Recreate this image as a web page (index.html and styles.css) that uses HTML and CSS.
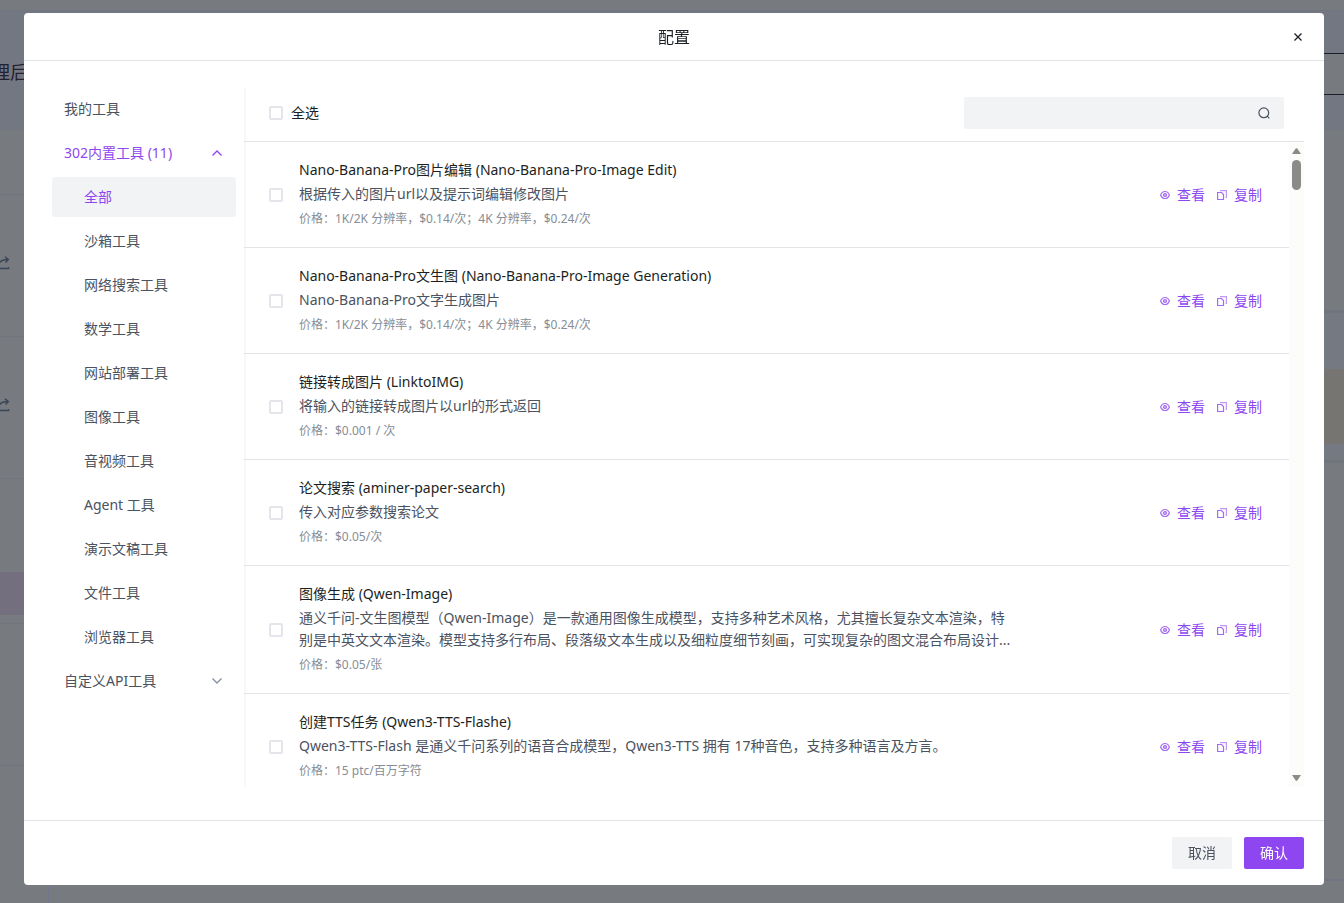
FILE: index.html
```
<!DOCTYPE html>
<html lang="zh-CN">
<head>
<meta charset="utf-8">
<title>配置</title>
<link rel="stylesheet" href="styles.css">
</head>
<body>
<svg class="defs" aria-hidden="true">
  <symbol id="eye" viewBox="0 0 10 10"><path d="M.6 5C1.600 2.500 3.200 1.500 5 1.500S8.400 2.500 9.400 5C8.400 7.500 6.800 8.500 5 8.500S1.600 7.500.6 5Z"/><circle cx="5" cy="5" r="1.500" fill="currentColor" fill-opacity=".5"/></symbol>
  <symbol id="copy" viewBox="0 0 10 10"><path d="M.6 2.500H4.500L6.500 4.500V9.500H.6Z"/><path d="M3 .6H9.400V7.500H8.500" opacity=".7"/></symbol>
  <symbol id="share" viewBox="0 0 14 14"><path d="M1 7V12.500H12.500V11M3 7.500C4.500 4.500 8 3.500 12 3.500M9 .8L12.300 3.500L9.500 6.500"/></symbol>
  <symbol id="down" viewBox="0 0 12 12"><path d="M1.500 3.500L6 8L10.500 3.500"/></symbol>
</svg>

<div class="page" aria-hidden="true">
  <div class="page-bar"></div>
  <div class="page-hero"><span class="hero-text">理后</span><span class="hero-field"></span></div>
  <div class="page-body">
    <div class="page-left">
      <div class="cell first"></div>
      <div class="cell"><svg class="share"><use href="#share"/></svg></div>
      <div class="cell"><svg class="share"><use href="#share"/></svg></div>
      <div class="cell tall"><span class="active-tag"></span></div>
      <div class="cell"></div>
    </div>
    <div class="page-right">
      <div class="notice"><span class="notice-inner"></span></div>
      <div class="block"></div>
      <div class="block-end"></div>
    </div>
  </div>
</div>

<div class="overlay">
<section class="dialog" role="dialog" aria-labelledby="dialog-title">
  <header class="dialog-head">
    <h1 id="dialog-title">配置</h1>
    <button class="close" type="button" aria-label="关闭"><svg viewBox="0 0 10 10"><path d="M1.500 1.500L8.500 8.500M8.500 1.500L1.500 8.500"/></svg></button>
  </header>

  <div class="dialog-body">
    <nav class="sidebar" aria-label="工具分类">
      <button class="nav-item" type="button">我的工具</button>
      <button class="nav-item open" type="button" aria-expanded="true">302内置工具 (11)<svg class="chevron"><use href="#down"/></svg></button>
      <button class="nav-item sub current" type="button">全部</button>
      <button class="nav-item sub" type="button">沙箱工具</button>
      <button class="nav-item sub" type="button">网络搜索工具</button>
      <button class="nav-item sub" type="button">数学工具</button>
      <button class="nav-item sub" type="button">网站部署工具</button>
      <button class="nav-item sub" type="button">图像工具</button>
      <button class="nav-item sub" type="button">音视频工具</button>
      <button class="nav-item sub" type="button">Agent 工具</button>
      <button class="nav-item sub" type="button">演示文稿工具</button>
      <button class="nav-item sub" type="button">文件工具</button>
      <button class="nav-item sub" type="button">浏览器工具</button>
      <button class="nav-item" type="button" aria-expanded="false">自定义API工具<svg class="chevron"><use href="#down"/></svg></button>
    </nav>

    <div class="main">
      <div class="toolbar">
        <label class="select-all"><input class="check" type="checkbox">全选</label>
        <div class="search">
          <input type="text" aria-label="搜索工具">
          <svg viewBox="0 0 12 12"><circle cx="5.800" cy="5.800" r="4.900"/><path d="M9.200 9.200L11.300 11.300"/></svg>
        </div>
      </div>
      <div class="scroll">
        <div class="list">
          <article class="row">
            <input class="check" id="t1" type="checkbox">
            <div class="info">
              <label class="name" for="t1">Nano-Banana-Pro图片编辑 (Nano-Banana-Pro-Image Edit)</label>
              <p class="desc">根据传入的图片url以及提示词编辑修改图片</p>
              <p class="price">价格：1K/2K 分辨率，$0.14/次；4K 分辨率，$0.24/次</p>
            </div>
            <div class="actions"><button type="button"><svg><use href="#eye"/></svg>查看</button><button type="button"><svg><use href="#copy"/></svg>复制</button></div>
          </article>
          <article class="row">
            <input class="check" id="t2" type="checkbox">
            <div class="info">
              <label class="name" for="t2">Nano-Banana-Pro文生图 (Nano-Banana-Pro-Image Generation)</label>
              <p class="desc">Nano-Banana-Pro文字生成图片</p>
              <p class="price">价格：1K/2K 分辨率，$0.14/次；4K 分辨率，$0.24/次</p>
            </div>
            <div class="actions"><button type="button"><svg><use href="#eye"/></svg>查看</button><button type="button"><svg><use href="#copy"/></svg>复制</button></div>
          </article>
          <article class="row">
            <input class="check" id="t3" type="checkbox">
            <div class="info">
              <label class="name" for="t3">链接转成图片 (LinktoIMG)</label>
              <p class="desc">将输入的链接转成图片以url的形式返回</p>
              <p class="price">价格：$0.001 / 次</p>
            </div>
            <div class="actions"><button type="button"><svg><use href="#eye"/></svg>查看</button><button type="button"><svg><use href="#copy"/></svg>复制</button></div>
          </article>
          <article class="row">
            <input class="check" id="t4" type="checkbox">
            <div class="info">
              <label class="name" for="t4">论文搜索 (aminer-paper-search)</label>
              <p class="desc">传入对应参数搜索论文</p>
              <p class="price">价格：$0.05/次</p>
            </div>
            <div class="actions"><button type="button"><svg><use href="#eye"/></svg>查看</button><button type="button"><svg><use href="#copy"/></svg>复制</button></div>
          </article>
          <article class="row">
            <input class="check" id="t5" type="checkbox">
            <div class="info">
              <label class="name" for="t5">图像生成 (Qwen-Image)</label>
              <p class="desc">通义千问-文生图模型（Qwen-Image）是一款通用图像生成模型，支持多种艺术风格，尤其擅长复杂文本渲染，特别是中英文文本渲染。模型支持多行布局、段落级文本生成以及细粒度细节刻画，可实现复杂的图文混合布局设计...</p>
              <p class="price">价格：$0.05/张</p>
            </div>
            <div class="actions"><button type="button"><svg><use href="#eye"/></svg>查看</button><button type="button"><svg><use href="#copy"/></svg>复制</button></div>
          </article>
          <article class="row">
            <input class="check" id="t6" type="checkbox">
            <div class="info">
              <label class="name" for="t6">创建TTS任务 (Qwen3-TTS-Flashe)</label>
              <p class="desc">Qwen3-TTS-Flash 是通义千问系列的语音合成模型，Qwen3-TTS 拥有 17种音色，支持多种语言及方言。</p>
              <p class="price">价格：15 ptc/百万字符</p>
            </div>
            <div class="actions"><button type="button"><svg><use href="#eye"/></svg>查看</button><button type="button"><svg><use href="#copy"/></svg>复制</button></div>
          </article>
        </div>
        <div class="scrollbar" aria-hidden="true">
          <svg viewBox="0 0 9 6"><path d="M3.700.6Q4.500-.3 5.300.6L9 6H0Z"/></svg>
          <span class="thumb"></span>
          <svg class="end" viewBox="0 0 9 6"><path d="M3.700 5.400Q4.500 6.300 5.300 5.400L9 0H0Z"/></svg>
        </div>
      </div>
    </div>
  </div>

  <footer class="dialog-foot">
    <button class="btn" type="button">取消</button>
    <button class="btn primary" type="button">确认</button>
  </footer>
</section>
</div>
</body>
</html>
```
FILE: styles.css
```
* { box-sizing: border-box; }
body {
  margin: 0;
  height: 100vh;
  overflow: hidden;
  background: #777b7f;
  color: #1c1f23;
  font-family: "Noto Sans", "Noto Sans CJK SC", sans-serif;
  font-size: 14px;
  line-height: 22px;
}
button, input { font: inherit; color: inherit; }
button { border: 0; background: none; padding: 0; cursor: pointer; }
svg { fill: none; stroke: currentColor; flex: none; }
h1, p { margin: 0; }
.defs { position: absolute; width: 0; height: 0; }

/* dimmed page behind the dialog */
.page { height: 100%; display: flex; flex-direction: column; }
.page-bar { height: 11px; border-bottom: 1px solid #717581; flex: none; }
.page-hero { height: 119px; flex: none; display: flex; justify-content: space-between; background: #737781; overflow: hidden; }
.hero-text { margin: 49px 0 0 -8px; font-size: 18px; line-height: 24px; color: #24202e; }
.hero-field { width: 320px; height: 42px; margin-top: 42px; background: #777b7f; border: solid #1b1e26; border-width: 1px 0; }
.page-body { flex: 1; display: flex; justify-content: space-between; min-height: 0; }
.page-left { width: 49px; border-right: 1px solid #72768a; }
.cell { height: 142px; border-bottom: 1px solid #70747b; display: flex; align-items: center; }
.cell.first { height: 65px; }
.cell.tall { height: 145px; align-items: flex-end; padding-bottom: 8px; }
.active-tag { width: 24px; height: 43px; background: #736f7f; }
.share { width: 14px; height: 14px; margin: 0 0 6px -4px; color: #3b4656; stroke-width: 1.500; }
.page-right { width: 48px; display: flex; flex-direction: column; padding-top: 180px; }
.notice { height: 153px; padding-top: 56px; background: #757981; border: solid #70747d; border-width: 3px 0; flex: none; }
.notice-inner { display: block; height: 75px; background: #777571; }
.block { flex: 1; }
.block-end { height: 24px; border-top: 2px solid #717581; }

.overlay { position: fixed; inset: 0; display: flex; padding: 13px 20px 18px 24px; }
.dialog { flex: 1; display: flex; flex-direction: column; background: #fff; border-radius: 4px; min-width: 0; }
.dialog-head { position: relative; height: 48px; flex: none; display: flex; align-items: center; justify-content: center; border-bottom: 1px solid #e3e4e8; }
.dialog-head h1 { font-size: 16px; font-weight: 400; line-height: 24px; }
.close { position: absolute; right: 16px; top: 14px; width: 20px; height: 20px; display: grid; place-items: center; }
.close svg { width: 10px; height: 10px; stroke-width: 1.300; }
.dialog-body { flex: 1; min-height: 0; display: flex; padding: 26px 20px 33px; }

.sidebar { width: 202px; flex: none; display: flex; flex-direction: column; gap: 4px; padding: 2px 8px; border-right: 2px solid #f7f8fa; color: #4b5260; }
.nav-item { height: 40px; flex: none; display: flex; align-items: center; justify-content: space-between; padding: 0 13px 0 12px; border-radius: 3px; text-align: left; }
.nav-item.sub { padding-left: 32px; }
.nav-item.open, .nav-item.current { color: #8e47f0; }
.nav-item.current { background: #f2f3f5; }
.chevron { width: 12px; height: 12px; color: #868d9c; stroke-width: 1.300; }
.open .chevron { color: #8e47f0; transform: rotate(180deg); }

.main { flex: 1; min-width: 0; display: flex; flex-direction: column; margin-left: -2px; }
.toolbar { height: 55px; flex: none; display: flex; align-items: center; justify-content: space-between; padding: 0 20px 2px 25px; border-bottom: 1px solid #e3e4e8; }
.select-all { display: flex; align-items: center; gap: 8px; }
.check { appearance: none; flex: none; width: 14px; height: 14px; margin: 0; border: 2px solid #e4e5eb; border-radius: 2px; background: #fff; }
.search { width: 320px; height: 32px; display: flex; align-items: center; padding-right: 14px; background: #f2f3f5; border-radius: 2px; color: #4b5260; }
.search input { flex: 1; min-width: 0; height: 32px; padding: 0 12px; border: 0; outline: 0; background: none; }
.search svg { width: 12px; height: 12px; stroke-width: 1.200; }
.scroll { flex: 1; min-height: 0; display: flex; }
.list { flex: 1; min-width: 0; overflow: hidden; }
.row { display: flex; align-items: center; gap: 16px; padding: 17px 27px 16px 25px; border-bottom: 1px solid #e3e4e8; }
.info { flex: 1; min-width: 0; display: flex; flex-direction: column; align-items: flex-start; gap: 2px; }
.desc { max-width: 716px; color: #4b5260; }
.price { margin: 2px 0; font-size: 12px; line-height: 20px; color: #868d96; }
.actions { display: flex; gap: 12px; color: #8e47f0; }
.actions button { display: flex; align-items: center; gap: 7px; }
.actions svg { width: 10px; height: 10px; stroke-width: 1.200; opacity: .8; }
.scrollbar { width: 15px; flex: none; display: flex; flex-direction: column; align-items: center; gap: 6px; padding: 6px 0; background: #fcfcfa; color: #8a8a88; }
.scrollbar svg { width: 9px; height: 6px; fill: currentColor; stroke: none; }
.scrollbar .end { margin-top: auto; }
.thumb { width: 9px; height: 30px; border-radius: 5px; background: currentColor; }

.dialog-foot { flex: none; display: flex; justify-content: flex-end; gap: 12px; padding: 16px 20px; border-top: 1px solid #e3e4e8; }
.btn { width: 60px; height: 32px; border-radius: 2px; background: #f2f3f5; color: #4b5260; }
.btn.primary { background: #8e47f0; color: #fff; }
```
